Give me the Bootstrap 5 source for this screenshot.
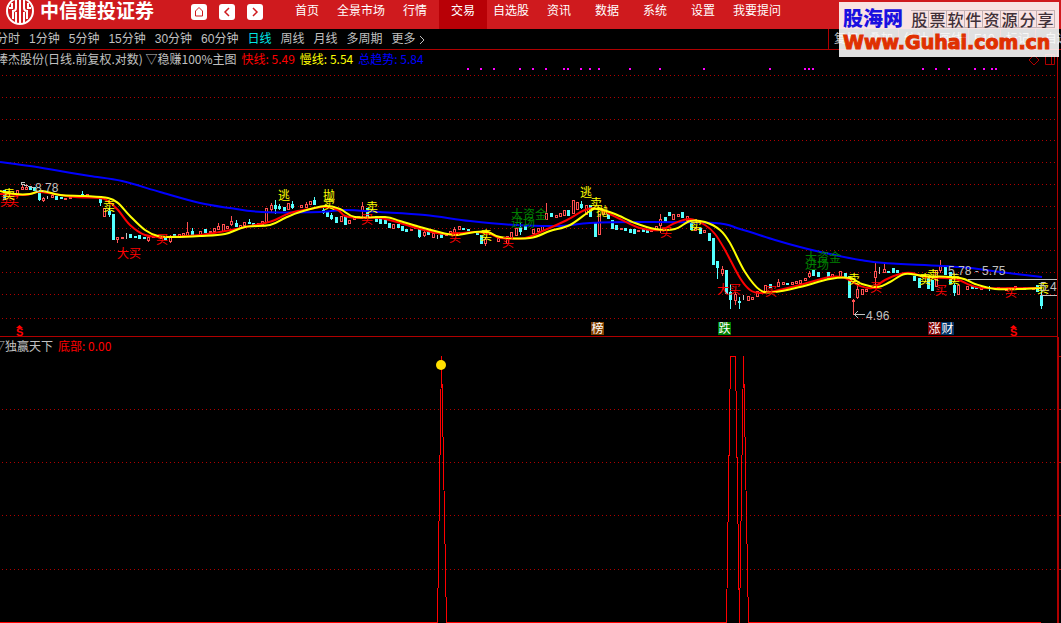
<!DOCTYPE html>
<html lang="zh-CN">
<head>
<meta charset="utf-8">
<meta name="viewport" content="width=device-width, initial-scale=1">
<title>中信建投证券</title>
<link href="https://cdn.jsdelivr.net/npm/bootstrap@5.3.0/dist/css/bootstrap.min.css" rel="stylesheet">
<style>
body{background:#000;color:#c0c0c0;font:12px/18px "Liberation Sans","Noto Sans CJK SC",sans-serif;overflow-x:hidden}
a{color:inherit;text-decoration:none}
.topbar{background:#cf1a1e;height:29px;color:#fff}
.brandname{font-size:19px;line-height:24px;font-weight:700;margin-left:6px}
.brand{width:191px;padding-left:6px}
.sq{width:16px;height:16px;border:0;border-radius:3px;background:#fff;padding:0;display:flex}
.sqs{gap:12px}
.tabs{margin-left:20px}
.tabs a{min-width:48px;padding:2px 6px 0;text-align:center;height:29px;line-height:18px;white-space:nowrap}
.tabs a.active{background:#b80006}
.periods{height:21px;border-bottom:1px solid #b00000;line-height:21px;white-space:nowrap}
.bleed{margin-left:-4px}
.bleed-lg{margin-left:-7px}
.periods .active{color:#00e6e6}
.plist{gap:9px}
.tools{width:233px;border-left:1px solid #b00000}
.tools a{padding:0 5px;border-right:1px solid #900}
.legendrow{height:18px;line-height:17px;white-space:nowrap;font-family:"Noto Sans CJK SC",sans-serif}
.vals{gap:5px}
.r{color:#f00}.y{color:#ff0}.b{color:#00f}
.panel1{margin-right:3px;border-right:1px solid #b00000;border-bottom:1px solid #b00000}
.panel2{margin-right:2px;border-right:2px solid #b00000}
.plot{display:block;width:100%;height:auto;overflow:visible}
.plot text{font-family:"Liberation Sans","Noto Sans CJK SC",sans-serif;font-size:12px}
.plot text.sig{font-size:11px;font-weight:700}
.mark-box{top:2px;right:2px;width:220px;height:55px;background:rgba(255,255,255,.88);padding:4px 4px 0;white-space:nowrap}
.mark-cn{font-size:20px;line-height:26px;font-weight:900;color:#1a10e0}
.mark-sub{font:500 16px/18px "Noto Sans CJK SC",sans-serif;color:#403038}
.mark-sub span{width:18px;height:18px;text-align:center;border:1px solid #c5b2b4;border-left-width:0;line-height:16px}
.mark-url{font:700 19px/21px "DejaVu Sans","Liberation Sans",sans-serif;color:#e03000;-webkit-text-stroke:1px #e03000}
</style>
</head>
<body>
<header class="topbar d-flex position-relative">
  <div class="brand d-flex flex-shrink-0">
    <svg width="28" height="25" viewBox="0 0 28 25" fill="none" stroke="#fff"><circle cx="14" cy="11" r="13" stroke-width="2"/><path d="M14-2v26M10 0v8q0 3-3 3v8M18 0v8q0 3 3 3v8M10 23v-8M18 23v-8M6 3v5H3M22 3v5h3M10 12v3M18 12v3" stroke-width="2"/></svg>
    <span class="brandname">中信建投证券</span>
  </div>
  <div class="sqs d-flex pt-1">
    <button class="sq" aria-label="主页"><svg width="16" height="16" fill="none" stroke="#cf1a1e"><path d="M4.500 7L8 3.500 11.500 7V12H4.500Z"/></svg></button>
    <button class="sq" aria-label="后退"><svg width="16" height="16" fill="none" stroke="#cf1a1e" stroke-width="1.500"><path d="M10 4L6 8l4 4"/></svg></button>
    <button class="sq" aria-label="前进"><svg width="16" height="16" fill="none" stroke="#cf1a1e" stroke-width="1.500"><path d="M6 4l4 4-4 4"/></svg></button>
  </div>
  <nav class="tabs d-flex">
    <a href="#">首页</a><a href="#">全景市场</a><a href="#">行情</a><a href="#" class="active">交易</a><a href="#">自选股</a><a href="#">资讯</a><a href="#">数据</a><a href="#">系统</a><a href="#">设置</a><a href="#">我要提问</a>
  </nav>
  <div class="mark-box position-absolute z-3">
    <div class="d-flex align-items-center">
      <span class="mark-cn">股海网</span>
      <span class="mark-sub d-flex ms-2"><span>股</span><span>票</span><span>软</span><span>件</span><span>资</span><span>源</span><span>分</span><span>享</span></span>
    </div>
    <div class="mark-url">Www.Guhai.com.cn</div>
  </div>
</header>
<nav class="periods d-flex">
  <div class="plist bleed d-flex">
    <a href="#">分时</a><a href="#">1分钟</a><a href="#">5分钟</a><a href="#">15分钟</a><a href="#">30分钟</a><a href="#">60分钟</a><a href="#" class="active">日线</a><a href="#">周线</a><a href="#">月线</a><a href="#">多周期</a>
    <a href="#">更多 <svg width="7" height="10" fill="none" stroke="#c0c0c0"><path d="M1 1l4 4-4 4"/></svg></a>
  </div>
  <div class="tools ms-auto d-flex overflow-hidden">
    <a href="#">复权</a><a href="#">叠加</a><a href="#">统计</a><a href="#">画线</a><a href="#">F10</a><a href="#">标记</a><a href="#">-自选</a>
  </div>
</nav>
<main>
<section class="panel1">
  <div class="legendrow d-flex">
    <div class="bleed vals d-flex">
      <span>棒杰股份(日线.前复权.对数) ▽稳赚100%主图</span><span class="r">快线: 5.49</span><span class="y">慢线: 5.54</span><span class="b">总趋势: 5.84</span>
    </div>
    <svg class="ms-auto" width="30" height="18" fill="none" stroke="#b00000"><path d="M7 5l5 5-5 5-5-5zM18.500 4.500h9v10h-9zM24.500 4v10"/></svg>
  </div>
  <svg class="plot" viewBox="0 68 1057 268">
    <g id="grid1" stroke="#b00000" stroke-dasharray="1 3" shape-rendering="crispEdges"></g>
    <g id="dots" fill="#f0f"></g>
    <g id="candles" shape-rendering="crispEdges"></g>
    <g id="averages" fill="none" stroke-width="2" stroke-linejoin="round"></g>
    <g fill="none" stroke="#c0c0c0" shape-rendering="crispEdges"><path d="M968 279.500H1057M1040 295.500H1057M854 314.500H865M854 315l4-4M854 314l4 4M25 182h-4v3M21 184l14 4"/></g>
    <g id="labels"></g>
    <g id="tags"></g>
  </svg>
</section>
<section class="panel2">
  <div class="legendrow"><div class="bleed-lg vals d-flex"><span>▽独赢天下</span><span class="r">底部: 0.00</span></div></div>
  <svg class="plot" viewBox="0 355 1057 268" shape-rendering="crispEdges">
    <path stroke="#b00000" stroke-dasharray="1 3" d="M2 409.500H1057M2 462.500H1057M2 515.500H1057M2 569.500H1057"/>
    <path stroke="#b00000" d="M1057 356.500H1061M1057 409.500H1061M1057 462.500H1061M1057 515.500H1061M1057 569.500H1061"/>
    <path fill="none" stroke="#f00" d="M0 622.500H437.500L441.500 356 446.500 622.500H726.500L730.500 356.500H735.500L739.500 622.500 743.500 356 748.500 622.500H1041"/>
    <circle cx="441" cy="365" r="5" fill="#ffe000" shape-rendering="auto"/>
  </svg>
</section>
</main>
<script src="https://cdn.jsdelivr.net/npm/bootstrap@5.3.0/dist/js/bootstrap.bundle.min.js"></script>
<script>
const el=(p,n,a,t)=>{const e=document.createElementNS('http://www.w3.org/2000/svg',n);for(const k in a)e.setAttribute(k,a[k]);if(t)e.textContent=t;document.getElementById(p).appendChild(e)};
[75,97,119,140,162,184,206,228,250,272,294,318].forEach(y=>el('grid1','path',{d:`M2 ${y+.5}H1057`}));
[468,481,494,520,533,546,564,568,581,590,599,630,660,704,770,805,809,813,923,936,949,975,984,992,996].forEach(x=>el('dots','rect',{x:x-1,y:68,width:2,height:2}));
// moving averages: x y pairs, joined by a smooth curve
const MA={'#00f':'0 162 30 166 60 171 90 176 122 181 160 192 200 203 230 208 262 212 320 212 345 210 380 212 425 215 470 221 515 225 560 226 590 223 640 222 715 223 740 229 775 240 800 247 830 254 860 260 885 263 960 267 1000 272 1042 277',
'#f00':'0 194 25 195 38 192 55 194 75 197 100 198 108 201 118 210 130 225 145 235 165 237 200 235 225 231 250 226 265 223 275 220 290 213 310 209 325 207 338 210 345 216 360 218 380 218 400 223 420 229 445 234 475 232 490 234 500 238 525 238 545 230 565 221 585 210 598 209 620 219 640 228 660 230 675 223 690 219 705 225 715 234 725 250 740 278 750 290 760 293 775 291 800 285 830 277 845 278 860 286 872 288 885 280 900 274 912 273 925 277 955 279 970 285 985 288 1042 288',
'#ff0':'0 191 15 194 30 194 42 191 60 195 85 196 108 198 118 203 130 216 145 230 158 236 175 237 200 236 225 234 245 227 270 225 285 218 300 212 325 206 340 209 355 217 385 217 400 221 420 227 435 231 455 235 475 232 488 232 500 237 530 238 550 231 570 225 590 211 598 209 615 214 635 223 655 229 675 229 690 221 705 222 720 230 730 243 745 272 760 290 775 292 800 287 830 279 850 278 862 284 878 287 890 282 905 274 925 276 960 278 975 284 995 289 1020 289 1042 288'};
for(const c in MA){const n=MA[c].split(' ').map(Number),p=[];for(let i=0;i<n.length;i+=2)p.push([n[i],n[i+1]]);
 let d='M'+p[0];
 for(let i=0;i<p.length-1;i++){const a=p[i-1]||p[i],b=p[i],e=p[i+1],f=p[i+2]||e;
  d+=`C${b[0]+(e[0]-a[0])/6} ${b[1]+(e[1]-a[1])/6} ${e[0]-(f[0]-b[0])/6} ${e[1]-(f[1]-b[1])/6} ${e}`}
 el('averages','path',{d,stroke:c})}
// x, direction, high, low, body top, body bottom
const C=`4d190,200 17u190,196 22u184,190,187,190 26u184,190,187,190 30d186,190 34d187,191 39d190,201,193,200 43u197,202,198,201 47g196,199 52u193,198,195,198 56d196,200 61d197,199 65u198,200 70u197,199 82d191,197,194,196 87u194,197 100d196,206,199,203 104u208,217 109d208,217,211,215 113d214,240 117u237,243,237,240 122u237,238 126g233,239 130d234,238 135d236,238 139d235,239 144d237,239 148u236,242,237,241 153u236,238 161u236,239 165d237,240 170u235,243,236,242 174d234,236 179u234,237 183u233,236 187u222,236,232,236 192d228,236,231,235 200u231,235 205d229,233 210u231,233 214u228,232 218u223,230,226,230 223u224,232 227u226,229 231u216,226,221,225 236d220,227,223,227 240u225,228 244u222,226 249d219,224,222,224 253d223,225 258u223,226 262u221,225 266u208,223 271u203,212,205,210 275d200,214,205,209 279d204,210,206,209 284d207,211 288u203,210 292d201,209,204,208 301u205,208 306u202,208,204,208 310u201,205 314d197,205,200,205 323d208,214,210,213 327d212,217 331d213,220,215,219 336d217,223 341u216,222 345d216,225 349u220,224 354u217,220 358u216,218 362u202,218,206,211 367d208,217 376d216,222 380d219,224 385d220,224 389d223,228 393u224,229 398d224,228 402d226,231 406d229,232 411u229,231 415u226,229 419d226,238,229,237 424u231,237,232,236 428d229,235 433u233,238 437g235,239 441d232,238 446u234,236 450u231,235 454u227,234,229,234 459u226,230 463d228,230 468d229,231 477d231,235 481d235,244 485u237,246,239,244 498u238,242 507u236,244 511u232,239 516u228,236 520d223,235,227,232 525d225,230 533u229,234 538u228,232 542u226,231 546u203,220,213,220 551d213,217 556u215,218 560u213,217 564u210,216 568d210,216 573u200,214 577u202,210 581d201,209,204,208 586u205,215 590d205,217 595d222,237 599u214,235 603u211,215 608d212,219 612d220,229 616d225,230 621u228,230 625d228,231 630d229,233 634d229,234 638u230,232 643d229,232 647d229,233 651u230,232 656u226,231 660u214,233,219,226 665d217,222 669d212,216 673u214,220 678u214,217 682d212,218 687u216,221 691d222,230 695u228,231 700d228,234 704u230,233 709d233,241 713d238,265 717d261,279,261,268 722u266,276,269,274 726d270,294 730d284,309,292,300 735u292,305,294,301 739d297,309,301,303 743g295,300 748u296,301 752u297,300 757u291,297 765u285,292 770d284,288 778u279,287,282,287 783u282,285 787d283,285 792u282,285 796u281,284 800u280,284 805u278,281 809u271,278,273,277 813d270,276 818d272,277 828d272,279 832u274,277 840u271,277 845d273,277 849d276,298 853u299,315,300,302 857u286,299,289,298 862u289,295 866u289,292 875u262,285,271,278 879g267,274 884u264,273,269,273 888d271,273 893d268,273 897d270,273 914d276,281 919d278,288 928d276,289 932d280,291 936u270,287 940u260,273,266,271 945d266,275 950d272,284 954d283,296,285,293 958u285,295 967u286,290 972d286,289 976d287,289 981u287,290 989d286,291,288,289 998u287,290 1006u288,291 1015u286,290 1024d287,290 1033u287,290 1037d285,292 1041d290,309,296,306`;
C.split(' ').forEach(s=>{const [,x,t,r]=s.match(/(\d+)([udg])(.*)/),v=r.split(',').map(Number),X=+x,c={u:'#ff5050',d:'#54ffff',g:'#c0c0c0'}[t];
 const [h,l,a=h,b=l]=v;
 if(t=='u'){el('candles','path',{d:`M${X+.5} ${h}V${a}M${X+.5} ${b}V${l}`,stroke:c});el('candles','rect',{x:X-.5,y:a+.5,width:2,height:Math.max(1,b-a-1),fill:'#000',stroke:c})}
 else{el('candles','path',{d:`M${X+.5} ${h}V${l}`,stroke:c});if(t=='d')el('candles','rect',{x:X-1,y:a,width:3,height:b-a,fill:c})}});
const L={'#f00':[['买',0,206],['买',7,206],['买',156,244],['大买',117,258],['买',361,224],['买',449,242],['买',502,247],['买',660,237],['大买',717,294],['买',765,296],['买',870,292],['买',935,295],['买',1005,297]],
'#008000':[['大资金',511,219],['进场',511,227],['大资金',805,262],['进场',805,269]],
'#ff0':[['卖',3,199],['卖',103,211],['逃',278,200],['抛',323,200],['卖',323,209],['卖',366,212],['卖',480,240],['逃',580,197],['卖',590,208],['抛',596,216],['卖',690,230],['卖',848,284],['卖',919,284],['卖',927,280],['卖',948,284],['卖',1037,293]],
'#c0c0c0':[['8.78',35,192],['4.96',866,320],['5.78 - 5.75',948,275],['5.4',1040,291]]};
for(const c in L)L[c].forEach(([t,x,y])=>el('labels','text',{x,y,fill:c},t));
[['榜',591,'#804000'],['跌',718,'#008000'],['涨',928,'#800000'],['财',941,'#003366']].forEach(([t,x,f])=>{el('tags','rect',{x,y:322,width:13,height:13,fill:f});el('tags','text',{x:x+.5,y:333,fill:'#fff'},t)});
[16,1010].forEach(x=>{el('tags','text',{x,y:336,fill:'#f00',class:'sig'},'S');el('tags','path',{d:`M${x} 328l3.500-3 3.500 3z`,fill:'#f00'})});
</script>
</body>
</html>
